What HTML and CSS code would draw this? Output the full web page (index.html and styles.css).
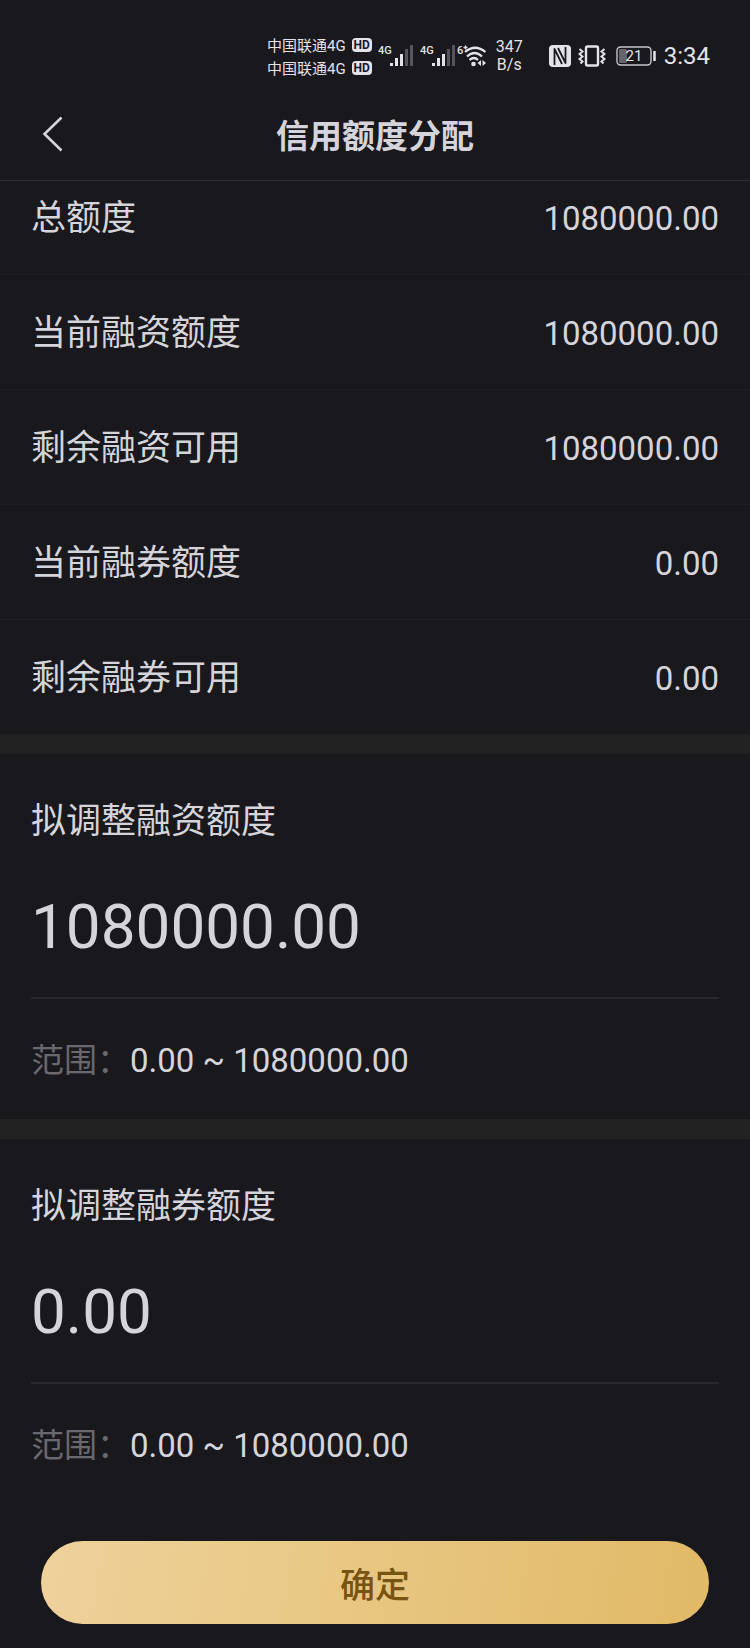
FILE: index.html
```
<!DOCTYPE html>
<html lang="zh-CN">

<head>
  <meta charset="UTF-8">
  <meta name="viewport" content="width=device-width, initial-scale=1.0">
  <title>信用额度分配</title>
  <link rel="stylesheet" href="styles.css">
</head>

<body>
  <!-- 1.顶部 -->
  <div class="top">
    <div class="status">
      <div class="carrier">
        <div class="carrier-row">中国联通4G <span class="hd">HD</span></div>
        <div class="carrier-row">中国联通4G <span class="hd">HD</span></div>
      </div>
      <div class="signals">
        <svg width="36" height="24" viewBox="0 0 36 24">
          <text x="0" y="10">4G</text>
          <path d="M13.5 22v-3M18.5 22v-8M23.5 22V10" stroke="#e4e3e8" stroke-width="3" />
          <path d="M28.5 22V5M33.5 22V1" stroke="#55545a" stroke-width="3" />
        </svg>
        <svg width="36" height="24" viewBox="0 0 36 24">
          <text x="0" y="10">4G</text>
          <path d="M13.5 22v-3M18.5 22v-8M23.5 22V10" stroke="#e4e3e8" stroke-width="3" />
          <path d="M28.5 22V5M33.5 22V1" stroke="#55545a" stroke-width="3" />
        </svg>
      </div>
      <svg class="wifi" width="30" height="24" viewBox="0 0 30 24">
        <text x="0" y="10">6</text>
        <path d="M6.5 3.5h4M8.5 1.5v4" stroke="#e4e3e8" stroke-width="1.4" />
        <path d="M8 8Q18-.5 28.5 8M10 12.5Q17.5 5.5 25 12.5M12.5 16Q17 12 21 16" fill="none" stroke="#e4e3e8" stroke-width="2.2" />
        <circle cx="16.5" cy="20" r="2.3" fill="#e4e3e8" />
        <path d="M24 16v6l-3.5-3zM25.5 16v6l3.5-3z" fill="#e4e3e8" />
      </svg>
      <div class="speed">347<br>B/s</div>
      <svg class="nfc" width="22" height="22" viewBox="0 0 22 22">
        <rect width="22" height="22" rx="4" fill="#e4e3e8" />
        <path d="M5.5 20V4L13 19M16.5 2v16L9 3" fill="none" stroke="#19181d" stroke-width="1.8" stroke-linejoin="round" />
      </svg>
      <svg class="shake" width="28" height="22" viewBox="0 0 28 22">
        <rect x="8" y="1.5" width="12" height="19" rx="1.5" fill="none" stroke="#e4e3e8" stroke-width="2.4" />
        <path d="M1.5 4l3 2.5-3 2.5 3 2.5-3 2.5 3 2.5-2 2M26.5 4l-3 2.5 3 2.5-3 2.5 3 2.5-3 2.5 2 2" fill="none" stroke="#e4e3e8" stroke-width="2" />
      </svg>
      <svg class="battery" width="41" height="20" viewBox="0 0 41 20">
        <rect x="1" y="1" width="34" height="18" rx="3.5" fill="none" stroke="#c5c4ca" stroke-width="1.4" />
        <rect x="3" y="3" width="8" height="14" rx="1" fill="#66656b" />
        <path d="M38.5 5v10" stroke="#e4e3e8" stroke-width="2.5" />
        <text x="18" y="15" text-anchor="middle">21</text>
      </svg>
      <div class="time">3:34</div>
    </div>
    <div class="nav">
      <button class="back" type="button" aria-label="返回">
        <svg width="24" height="36" viewBox="0 0 24 36">
          <path d="M20.5 1.5L3.5 18l17 16.5" fill="none" stroke="#d5d4da" stroke-width="2.6" />
        </svg>
      </button>
      <h1>信用额度分配</h1>
    </div>
  </div>

  <!-- 2.额度列表 -->
  <dl class="list">
    <div class="row">
      <dt>总额度</dt>
      <dd>1080000.00</dd>
    </div>
    <div class="row">
      <dt>当前融资额度</dt>
      <dd>1080000.00</dd>
    </div>
    <div class="row">
      <dt>剩余融资可用</dt>
      <dd>1080000.00</dd>
    </div>
    <div class="row">
      <dt>当前融券额度</dt>
      <dd>0.00</dd>
    </div>
    <div class="row">
      <dt>剩余融券可用</dt>
      <dd>0.00</dd>
    </div>
  </dl>

  <!-- 3.调整额度 -->
  <form>
    <div class="adjust">
      <label for="rz">拟调整融资额度</label>
      <input id="rz" type="text" inputmode="decimal" value="1080000.00">
      <p class="range"><span>范围：</span>0.00 ~ 1080000.00</p>
    </div>
    <div class="adjust">
      <label for="rq">拟调整融券额度</label>
      <input id="rq" type="text" inputmode="decimal" value="0.00">
      <p class="range"><span>范围：</span>0.00 ~ 1080000.00</p>
    </div>
    <button class="submit" type="submit">确定</button>
  </form>
</body>

</html>
```
FILE: styles.css
```
* {
  margin: 0;
  padding: 0;
  box-sizing: border-box;
}

body {
  background-color: #19181d;
  color: #d5d4da;
  font-family: Roboto, "Noto Sans CJK SC", sans-serif;
  font-size: 33px;
}

button,
input {
  border: 0;
  background: none;
  color: inherit;
  font-family: inherit;
}

/* 顶部 */
.top {
  position: sticky;
  top: 0;
  z-index: 1;
  background-color: #19181d;
  border-bottom: 1px solid #303035;
}

.status {
  display: flex;
  justify-content: flex-end;
  align-items: center;
  height: 88px;
  padding: 24px 40px 0 0;
  color: #e4e3e8;
}

.status text {
  fill: #e4e3e8;
  font-size: 11px;
  font-weight: 500;
}

.status .battery text {
  font-size: 15px;
  font-weight: 400;
}

.carrier {
  margin-right: 6px;
}

.carrier-row {
  display: flex;
  align-items: center;
  gap: 6px;
  height: 23px;
  font-size: 15px;
}

.hd {
  width: 20px;
  border-radius: 4px;
  background-color: #e4e3e8;
  color: #19181d;
  font-size: 12px;
  font-weight: 700;
  line-height: 14px;
  text-align: center;
}

.signals {
  display: flex;
  gap: 6px;
  margin-right: 1px;
}

.wifi {
  margin-right: 9px;
}

.speed {
  margin-right: 26px;
  font-size: 16px;
  line-height: 18px;
  text-align: center;
}

.nfc {
  margin-right: 7px;
}

.shake {
  margin-right: 10px;
}

.battery {
  margin-right: 7px;
}

.time {
  font-size: 24px;
}

.nav {
  display: grid;
  grid-template-columns: 80px 1fr 80px;
  align-items: center;
  height: 92px;
}

.back {
  height: 88px;
  padding-left: 41px;
  text-align: left;
}

.back svg {
  display: block;
}

h1 {
  font-size: 33px;
  font-weight: 700;
  text-align: center;
}

/* 列表，已向上滚动一点 */
.list {
  margin-top: -21px;
}

.row {
  display: flex;
  justify-content: space-between;
  align-items: baseline;
  padding: 4px 31px 0;
  border-bottom: 1px solid #202024;
  line-height: 110px;
}

.row:last-child {
  border-bottom: 0;
}

dt,
label {
  font-size: 35px;
}

/* 调整额度 */
.adjust {
  padding: 43px 31px 0;
  border-top: 20px solid #222223;
}

.adjust label {
  display: block;
  line-height: 50px;
}

.adjust input {
  display: block;
  width: 100%;
  height: 143px;
  margin-top: 9px;
  border-bottom: 2px solid #29292d;
  font-size: 62px;
  outline: none;
}

.range {
  padding: 37px 0 33px;
  line-height: 50px;
}

.range span {
  color: #69686d;
}

.submit {
  display: block;
  width: calc(100% - 82px);
  height: 83px;
  margin: 37px auto 25px;
  border-radius: 42px;
  background: linear-gradient(100deg, #eed19c, #e9c986 40%, #e1b967);
  color: #785412;
  font-size: 35px;
  font-weight: 500;
}
```
